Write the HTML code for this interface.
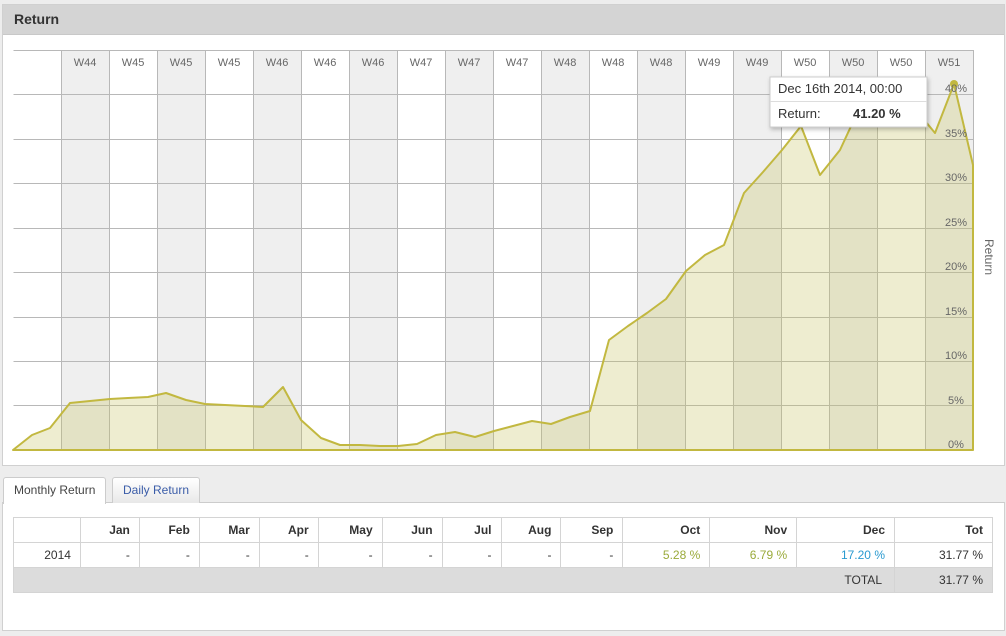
<!DOCTYPE html>
<html><head><meta charset="utf-8"><style>
body{margin:0;width:1006px;height:636px;background:#ededed;font-family:"Liberation Sans",sans-serif;position:relative;overflow:hidden}
.p1{position:absolute;left:2px;top:4px;width:1001px;height:460px;background:#fff;border:1px solid #d0d0d0}
.hd{height:29px;background:#d4d4d4;border-bottom:1px solid #c8c8c8;font-weight:bold;font-size:14px;color:#333;line-height:29px;padding-left:11px}
.p2{position:absolute;left:2px;top:502px;width:1001px;height:127px;background:#fff;border:1px solid #d0d0d0;border-top:1px solid #ccc}
.tab{position:absolute;top:477px;height:25px;font-size:12px;line-height:24px;padding:0 10px;border:1px solid #ccc;border-bottom:none;border-radius:3px 3px 0 0}
table{position:absolute;left:13px;top:517px;border-collapse:collapse;font-size:12px;color:#333;width:980px}
td{border:1px solid #d4d4d4;height:24px;text-align:right;padding:0 9px}
tr.h td{font-weight:bold}
tr.t td{background:#dcdcdc}
</style></head><body>
<div class="p1"><div class="hd">Return</div></div>
<svg style="position:absolute;left:0;top:0" width="1006" height="465">
<g fill="#efefef">
<rect x="61" y="50" width="48" height="400"/><rect x="157" y="50" width="48" height="400"/><rect x="253" y="50" width="48" height="400"/><rect x="349" y="50" width="48" height="400"/><rect x="445" y="50" width="48" height="400"/><rect x="541" y="50" width="48" height="400"/><rect x="637" y="50" width="48" height="400"/><rect x="733" y="50" width="48" height="400"/><rect x="829" y="50" width="48" height="400"/><rect x="925" y="50" width="48" height="400"/>
</g>
<g stroke="#b8b8b8" stroke-width="1">
<path d="M13.5 50.5H973.5M13.5 94.5H973.5M13.5 139.5H973.5M13.5 183.5H973.5M13.5 228.5H973.5M13.5 272.5H973.5M13.5 317.5H973.5M13.5 361.5H973.5M13.5 405.5H973.5M13.5 450.5H973.5"/>
<path d="M61.5 50V450M109.5 50V450M157.5 50V450M205.5 50V450M253.5 50V450M301.5 50V450M349.5 50V450M397.5 50V450M445.5 50V450M493.5 50V450M541.5 50V450M589.5 50V450M637.5 50V450M685.5 50V450M733.5 50V450M781.5 50V450M829.5 50V450M877.5 50V450M925.5 50V450M973.5 50V450"/>
</g>
<path d="M13 450L32 435L50 428L70 403L90 401L110 399L128 398L148 397L166 393L186 400L205 404L225 405L245 406L263 407L283 387L301 420L321 438L340 445L360 445L380 446L398 446L417 444L436 435L455 432L475 437L494 431L513 426L532 421L551 424L570 417L590 411L609 340L628 326L647 313L666 299L686 271L705 255L724 245L744 193L763 172L782 150L801 126L820 175L840 150L859 109L878 95L898 100L916 110L935 133L954 84L973 165L973 450Z" fill="rgba(200,195,100,0.3)" stroke="#c2b840" stroke-width="2" stroke-linejoin="round"/>
<circle cx="954" cy="84" r="4" fill="#c2b840"/>
<g font-size="11" fill="#666" text-anchor="middle">
<text x="85" y="66">W44</text><text x="133" y="66">W45</text><text x="181" y="66">W45</text><text x="229" y="66">W45</text><text x="277" y="66">W46</text><text x="325" y="66">W46</text><text x="373" y="66">W46</text><text x="421" y="66">W47</text><text x="469" y="66">W47</text><text x="517" y="66">W47</text><text x="565" y="66">W48</text><text x="613" y="66">W48</text><text x="661" y="66">W48</text><text x="709" y="66">W49</text><text x="757" y="66">W49</text><text x="805" y="66">W50</text><text x="853" y="66">W50</text><text x="901" y="66">W50</text><text x="949" y="66">W51</text>
<text x="956" y="92">40%</text><text x="956" y="137">35%</text><text x="956" y="181">30%</text><text x="956" y="226">25%</text><text x="956" y="270">20%</text><text x="956" y="315">15%</text><text x="956" y="359">10%</text><text x="956" y="404">5%</text><text x="956" y="448">0%</text>
<text transform="translate(985,257) rotate(90)" font-size="12">Return</text>
</g>
<rect x="770" y="77" width="157" height="50" fill="#fff" stroke="#ccc" style="filter:drop-shadow(1px 2px 2px rgba(0,0,0,.25))"/>
<path d="M770 101.5H927" stroke="#ddd"/>
<text x="778" y="93" font-size="13" fill="#333">Dec 16th 2014, 00:00</text>
<text x="778" y="118" font-size="13" fill="#333">Return:</text>
<text x="853" y="118" font-size="13" fill="#333" font-weight="bold">41.20 %</text>
</svg>
<div class="p2"></div>
<div class="tab" style="left:3px;background:#fff;color:#444;height:26px;z-index:2">Monthly Return</div>
<div class="tab" style="left:112px;background:linear-gradient(#fff,#e8e8e8);color:#3a5ca8">Daily Return</div>
<table>
<colgroup><col style="width:67px"><col style="width:59px"><col style="width:60px"><col style="width:60px"><col style="width:59px"><col style="width:64px"><col style="width:60px"><col style="width:59px"><col style="width:60px"><col style="width:62px"><col style="width:87px"><col style="width:87px"><col style="width:98px"><col style="width:98px"></colgroup>
<tr class="h"><td></td><td>Jan</td><td>Feb</td><td>Mar</td><td>Apr</td><td>May</td><td>Jun</td><td>Jul</td><td>Aug</td><td>Sep</td><td>Oct</td><td>Nov</td><td>Dec</td><td>Tot</td></tr>
<tr><td>2014</td><td>-</td><td>-</td><td>-</td><td>-</td><td>-</td><td>-</td><td>-</td><td>-</td><td>-</td><td style="color:#9aaa3a">5.28 %</td><td style="color:#9aaa3a">6.79 %</td><td style="color:#2a9ad0">17.20 %</td><td>31.77 %</td></tr>
<tr class="t"><td colspan="13" style="border-right:1px solid #d4d4d4;padding-right:12px">TOTAL</td><td>31.77 %</td></tr>
</table>
</body></html>
